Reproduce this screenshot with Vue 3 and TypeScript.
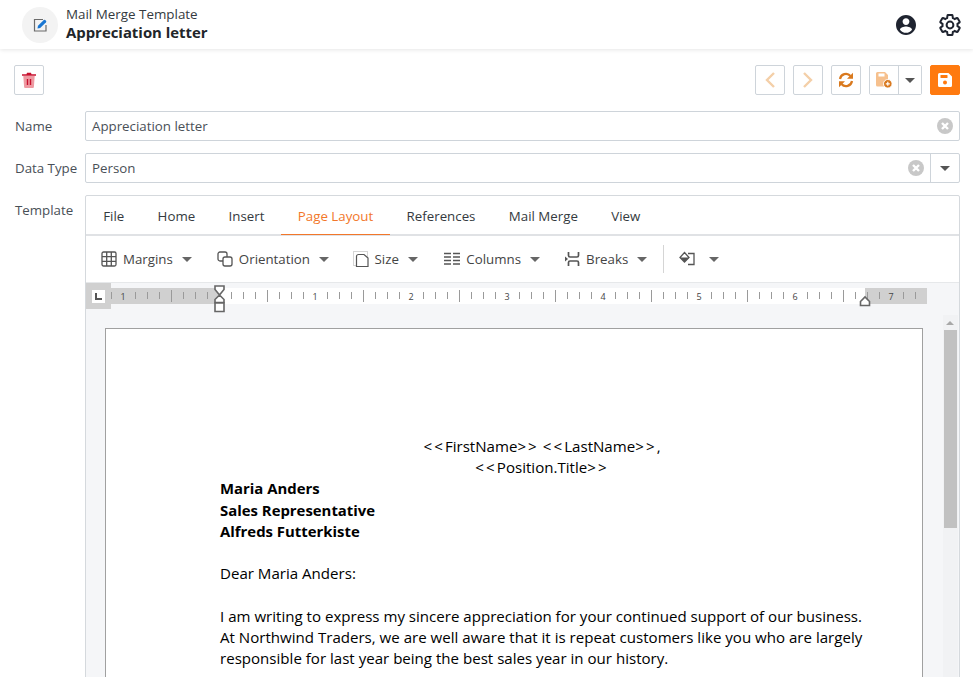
<script setup lang="ts">
const tabs = ['File', 'Home', 'Insert', 'Page Layout', 'References', 'Mail Merge', 'View']
const ticks = Array.from({ length: 68 }, (_, i) => i)
function tickX(i: number): number { return i * 12 + 0.5 }
const inches = [
  { x: 12, t: '1' }, { x: 204, t: '1' }, { x: 300, t: '2' }, { x: 396, t: '3' }, { x: 492, t: '4' },
  { x: 588, t: '5' }, { x: 684, t: '6' }, { x: 780, t: '7' }
]
function isInch(i: number): boolean { return (i * 12 + 960 - 108) % 96 === 0 }
function isHalf(i: number): boolean { return (i * 12 + 960 - 108) % 96 === 48 }
</script>

<template>
  <div class="app">
    <header class="head">
      <div class="head-badge">
        <svg width="18" height="18" viewBox="0 0 18 18">
          <path d="M12 3.500H3.500V15H15V9" fill="none" stroke="#6b6b6b" stroke-width="1.200"/>
          <path d="M7 9.800 12.800 4a1 1 0 0 1 1.400 0l.8.800a1 1 0 0 1 0 1.400L9.200 12l-2.700.5z" fill="#1976d2"/>
        </svg>
      </div>
      <div class="head-text">
        <div class="head-sub">Mail Merge Template</div>
        <div class="head-title">Appreciation letter</div>
      </div>
      <div class="spacer"></div>
      <svg class="head-ico" width="24" height="24" viewBox="0 0 24 24"><path fill="#1f2430" d="M12 2C6.480 2 2 6.480 2 12s4.480 10 10 10 10-4.480 10-10S17.520 2 12 2zm0 3.200c1.900 0 3.400 1.500 3.400 3.400s-1.500 3.400-3.400 3.400-3.400-1.500-3.400-3.400 1.500-3.400 3.400-3.400zm0 14.600c-2.500 0-4.700-1.200-6-3.100.03-2 4-3.100 6-3.100s5.970 1.100 6 3.100c-1.300 1.900-3.500 3.100-6 3.100z"/></svg>
      <svg class="head-ico gear" width="24" height="24" viewBox="0 0 24 24"><path fill="none" stroke="#1f2430" stroke-width="2" d="M19.430 12.980c.04-.32.07-.64.07-.98 0-.34-.03-.66-.07-.98l2.110-1.650c.19-.15.24-.42.12-.64l-2-3.460c-.09-.16-.26-.25-.44-.25-.06 0-.12.01-.17.03l-2.490 1c-.52-.4-1.080-.73-1.690-.98l-.38-2.650C14.460 2.180 14.250 2 14 2h-4c-.25 0-.46.18-.49.42l-.38 2.650c-.61.25-1.170.59-1.690.98l-2.490-1c-.06-.02-.12-.03-.18-.03-.17 0-.34.09-.43.25l-2 3.460c-.13.22-.07.49.12.64l2.110 1.650c-.04.32-.07.65-.07.98 0 .33.03.66.07.98l-2.110 1.650c-.19.15-.24.42-.12.64l2 3.460c.09.16.26.25.44.25.06 0 .12-.01.17-.03l2.490-1c.52.4 1.080.73 1.690.98l.38 2.650c.03.24.24.42.49.42h4c.25 0 .46-.18.49-.42l.38-2.650c.61-.25 1.170-.59 1.690-.98l2.490 1c.06.02.12.03.18.03.17 0 .34-.09.43-.25l2-3.460c.12-.22.07-.49-.12-.64l-2.110-1.650z"/><circle cx="12" cy="12" r="3.400" fill="none" stroke="#1f2430" stroke-width="2"/></svg>
    </header>

    <main class="content">
      <div class="actions">
        <button class="btn">
          <svg width="14" height="16" viewBox="0 0 14 16">
            <path d="M1.300 4h11.400l-.8 11a1 1 0 0 1-1 1H3.100a1 1 0 0 1-1-1z" fill="#ee9aa2"/>
            <path d="M0 2.200h4.500L5 .8h4l.5 1.400H14v1.600H0z" fill="#c8102e"/>
            <path d="M4.800 7h1.400v6H4.800zM7.800 7h1.400v6H7.800z" fill="#c8102e"/>
          </svg>
        </button>
        <div class="spacer"></div>
        <button class="btn">
          <svg width="12" height="18" viewBox="0 0 12 18"><path d="M10 2 3 9l7 7" fill="none" stroke="#f4cfa8" stroke-width="2.400"/></svg>
        </button>
        <button class="btn">
          <svg width="12" height="18" viewBox="0 0 12 18"><path d="m2 2 7 7-7 7" fill="none" stroke="#f4cfa8" stroke-width="2.400"/></svg>
        </button>
        <button class="btn">
          <svg width="16" height="16" viewBox="0 0 16 16">
            <path d="M2 7a6 6 0 0 1 10.500-3" fill="none" stroke="#d9791e" stroke-width="2.200"/>
            <path d="M15 .8v6h-6z" fill="#d9791e"/>
            <path d="M14 9a6 6 0 0 1-10.500 3" fill="none" stroke="#d9791e" stroke-width="2.200"/>
            <path d="M1 15.200v-6h6z" fill="#d9791e"/>
          </svg>
        </button>
        <div class="split">
          <button class="split-main">
            <svg width="18" height="18" viewBox="0 0 18 18">
              <path d="M1 2.500A1.500 1.500 0 0 1 2.500 1H10l3 3v11.500H2.500A1.500 1.500 0 0 1 1 14z" fill="#f6c08d"/>
              <rect x="3.500" y="2.500" width="6" height="3" fill="#fff"/>
              <circle cx="12.800" cy="12.800" r="4.300" fill="#d9791e" stroke="#fff" stroke-width="1"/>
              <path d="M10.800 12.800h4M12.800 10.800v4" stroke="#fff" stroke-width="1.200"/>
            </svg>
          </button>
          <button class="split-arrow"><i class="caret dark"></i></button>
        </div>
        <button class="btn save">
          <svg width="14" height="14" viewBox="0 0 14 14">
            <path d="M1.500 0H10.500L14 3.500V12.500A1.500 1.500 0 0 1 12.500 14H1.500A1.500 1.500 0 0 1 0 12.500V1.500A1.500 1.500 0 0 1 1.500 0z" fill="#fff"/>
            <rect x="2.500" y="2" width="7" height="3" rx=".6" fill="#ff7a0f"/>
            <circle cx="7" cy="9.500" r="2" fill="#ff7a0f"/>
          </svg>
        </button>
      </div>

      <div class="row">
        <label class="lbl">Name</label>
        <div class="field">
          <span class="val">Appreciation letter</span>
          <svg class="clear" width="16" height="16" viewBox="0 0 16 16"><circle cx="8" cy="8" r="8" fill="#c8c8c8"/><path d="m5 5 6 6M11 5l-6 6" stroke="#fff" stroke-width="2.400"/></svg>
        </div>
      </div>
      <div class="row">
        <label class="lbl">Data Type</label>
        <div class="field">
          <span class="val">Person</span>
          <svg class="clear" width="16" height="16" viewBox="0 0 16 16"><circle cx="8" cy="8" r="8" fill="#c8c8c8"/><path d="m5 5 6 6M11 5l-6 6" stroke="#fff" stroke-width="2.400"/></svg>
          <span class="drop"><i class="caret dark"></i></span>
        </div>
      </div>

      <div class="row tpl">
        <label class="lbl">Template</label>
        <div class="editor">
          <nav class="tabs">
            <span v-for="t in tabs" :key="t" class="tab" :class="{ on: t === 'Page Layout' }">{{ t }}</span>
          </nav>
          <div class="tools">
            <span class="tool">
              <svg width="16" height="16" viewBox="0 0 16 16"><rect x="1" y="1" width="14" height="14" rx="1.500" fill="none" stroke="#555" stroke-width="1.300"/><path d="M5.700 1v14M10.300 1v14M1 5.700h14M1 10.300h14" stroke="#555" stroke-width="1.300"/></svg>
              Margins <i class="caret"></i>
            </span>
            <span class="tool">
              <svg width="16" height="16" viewBox="0 0 16 16"><rect x="1" y="1" width="9" height="9" rx="2" fill="none" stroke="#555" stroke-width="1.300"/><rect x="6" y="6" width="9" height="9" rx="2" fill="#fff" stroke="#555" stroke-width="1.300"/></svg>
              Orientation <i class="caret"></i>
            </span>
            <span class="tool tool-size">
              <svg width="16" height="16" viewBox="0 0 16 16"><rect x=".5" y=".5" width="14" height="14" fill="none" stroke="#aaa" stroke-dasharray="1 1"/><path d="M3.500 15.500V5.500a2 2 0 0 1 2-2H11l4 3.500v8.500z" fill="#fff" stroke="#555" stroke-width="1.200"/></svg>
              Size <i class="caret"></i>
            </span>
            <span class="tool">
              <svg width="16" height="16" viewBox="0 0 16 16"><path d="M0 2.500h7M9 2.500h7M0 6h7M9 6h7M0 9.500h7M9 9.500h7M0 13h7M9 13h7" stroke="#555" stroke-width="1.500"/></svg>
              Columns <i class="caret"></i>
            </span>
            <span class="tool tool-breaks">
              <svg width="17" height="16" viewBox="0 0 17 16"><path d="M3.500 1v3.500a1.500 1.500 0 0 0 1.500 1.500h7a1.500 1.500 0 0 0 1.500-1.500V1M3.500 15v-3.500A1.500 1.500 0 0 1 5 10h7a1.500 1.500 0 0 1 1.500 1.500V15" fill="none" stroke="#555" stroke-width="1.700"/><path d="M0 5.500 3 8l-3 2.500z" fill="#555"/></svg>
              Breaks <i class="caret"></i>
            </span>
            <span class="sep"></span>
            <span class="tool">
              <svg width="17" height="16" viewBox="0 0 17 16"><path d="M9 2.500h6v11H9" fill="none" stroke="#555" stroke-width="1.300"/><path d="M5.500 1.500 10 6.500 5.500 11 1 6.500z" fill="#fff" stroke="#555" stroke-width="1.300"/><path d="M1 6.500h9L5.500 11z" fill="#555"/></svg>
              <i class="caret wide"></i>
            </span>
          </div>
          <div class="ruler-row">
            <span class="corner"><i class="corner-mark"></i></span>
            <svg class="ruler" width="848" height="30" viewBox="0 0 848 30">
              <rect x="0" y="5" width="816" height="16" fill="#fff"/>
              <rect x="0" y="5" width="108" height="16" fill="#d0d0d0"/>
              <rect x="754" y="5" width="62" height="16" fill="#d0d0d0"/>
              <template v-for="i in ticks" :key="i">
                <line v-if="!isInch(i)" :x1="tickX(i)" :x2="tickX(i)" :y1="isHalf(i) ? 7 : 9" :y2="isHalf(i) ? 19 : 16" stroke="#9a9a9a"/>
              </template>
              <text v-for="n in inches" :key="n.x" :x="n.x" y="16.500" class="rnum" text-anchor="middle">{{ n.t }}</text>
              <path d="M104 3h9v3.500L108.500 12l4.500 4.500v3h-9v-3l4.500-4.500L104 6.500z" fill="#fff" stroke="#666" stroke-width="1.600" />
              <path d="M104 20h9v8.500h-9z" fill="#fff" stroke="#666" stroke-width="1.600"/>
              <path d="M749.500 22.500V18.500L754 14l4.500 4.500v4z" fill="#fff" stroke="#666" stroke-width="1.600"/>
            </svg>
          </div>
          <div class="viewport">
            <div class="page">
              <p class="c"><span class="br">&lt;&lt;</span>FirstName<span class="br">&gt;&gt;</span> <span class="br">&lt;&lt;</span>LastName<span class="br">&gt;&gt;</span>,</p>
              <p class="c"><span class="br">&lt;&lt;</span>Position.Title<span class="br">&gt;&gt;</span></p>
              <p class="b">Maria Anders</p>
              <p class="b">Sales Representative</p>
              <p class="b">Alfreds Futterkiste</p>
              <p>&nbsp;</p>
              <p>Dear Maria Anders:</p>
              <p>&nbsp;</p>
              <p>I am writing to express my sincere appreciation for your continued support of our business. At Northwind Traders, we are well aware that it is repeat customers like you who are largely responsible for last year being the best sales year in our history.</p>
            </div>
            <div class="scroll">
              <i class="scroll-up"></i>
              <i class="thumb"></i>
            </div>
          </div>
        </div>
      </div>
    </main>
  </div>
</template>

<style>
html, body { margin: 0; background: #fff; overflow: hidden; }
</style>

<style scoped>
.app { width: 973px; height: 677px; overflow: hidden; display: flex; flex-direction: column; font-family: "Open Sans", "Noto Sans", sans-serif; font-size: 13.300px; color: #495057; background: #fff; }
.head { height: 49px; flex: none; display: flex; align-items: center; padding: 0 11px 0 22px; box-shadow: 0 1px 4px rgba(0,0,0,.1); box-sizing: border-box; position: relative; }
.head-badge { width: 36px; height: 36px; border-radius: 50%; background: #f3f3f3; display: flex; align-items: center; justify-content: center; margin-right: 8px; }
.head-text { display: flex; flex-direction: column; margin-bottom: 2px; }
.head-sub { font-size: 13.400px; line-height: 17px; color: #343a40; }
.head-title { font-size: 14.900px; line-height: 19px; font-weight: 700; color: #212529; }
.spacer { flex: 1; }
.gear { margin-left: 20px; }
.content { flex: 1; padding: 16px 13px 0 14px; min-height: 0; }
.actions { display: flex; gap: 8px; height: 30px; margin-bottom: 16px; }
.btn { width: 30px; height: 30px; padding: 0; background: #fff; border: 1px solid #ced4da; border-radius: 2px; display: flex; align-items: center; justify-content: center; }
.save { background: #ff7a0f; border-color: #ff7a0f; }
.split { display: flex; height: 30px; border: 1px solid #ced4da; border-radius: 2px; box-sizing: border-box; }
.split-main { width: 28px; border: 0; background: #fff; padding: 0; display: flex; align-items: center; justify-content: center; }
.split-arrow { width: 23px; border: 0; border-left: 1px solid #ced4da; background: #fff; padding: 0; display: flex; align-items: center; justify-content: center; box-sizing: border-box; }
.caret { display: inline-block; width: 0; height: 0; border-left: 5px solid transparent; border-right: 5px solid transparent; border-top: 5px solid #666; margin-left: 3px; }
.caret.dark { margin: 0; border-top-color: #555; }
.caret.wide { margin-left: 7px; }
.row { display: flex; margin-bottom: 12px; }
.lbl { width: 71px; flex: none; line-height: 30px; padding-left: 1px; box-sizing: border-box; color: #495057; }
.field { flex: 1; height: 30px; box-sizing: border-box; border: 1px solid #ced4da; border-radius: 2px; display: flex; align-items: center; padding-left: 6px; }
.val { flex: 1; color: #495057; }
.clear { margin-right: 6px; flex: none; }
.drop { width: 28px; align-self: stretch; border-left: 1px solid #ced4da; display: flex; align-items: center; justify-content: center; margin-left: 6px; }
.field:has(.drop) .clear { margin-right: 0; }
.tpl { margin: 0; }
.editor { flex: 1; border: 1px solid #d5d9dd; border-radius: 2px 2px 0 0; height: 600px; box-sizing: border-box; }
.tabs { height: 38px; display: flex; border-bottom: 2px solid #e0e2e5; padding-left: .5px; }
.tab { padding: 0 16.700px; line-height: 40px; color: #343a40; height: 39px; flex: none; box-sizing: border-box; }
.tab.on { color: #f2772a; border-bottom: 1px solid #f2772a; }
.tools { height: 46px; display: flex; align-items: center; padding-left: 15px; gap: 25px; border-bottom: 1px solid #e6e8ea; }
.tool { display: inline-flex; align-items: center; gap: 6px; color: #444; }
.tool-size { margin-left: -1.500px; margin-right: 1.500px; }
.tool-breaks { gap: 4px; }
.tool-breaks .caret { margin-left: 5px; }
.sep { width: 1px; height: 28px; background: #d5d5d5; margin: 0 -10px 0 -9px; }
.ruler-row { height: 30px; background: #f5f6f8; display: flex; }
.corner { width: 25px; height: 26px; background: #d0d0d0; display: flex; align-items: center; justify-content: center; flex: none; }
.corner-mark { width: 7px; height: 7px; background: #fff; box-shadow: 0 0 0 3px #fff; border-left: 2px solid #555; border-bottom: 2px solid #555; box-sizing: border-box; }
.ruler { display: block; flex: none; }
.rnum { font-size: 9px; fill: #444; font-family: "Open Sans", sans-serif; }
.viewport { background: #f5f6f8; display: flex; align-items: flex-start; height: 500px; padding: 15px 0 0 19px; position: relative; }
.page { width: 818px; box-sizing: border-box; background: #fff; border: 1px solid #a0a0a0; padding: 107px 58px 0 114px; height: 500px; color: #000; font-size: 15.090px; line-height: 21.200px; }
.page p { margin: 0; }
.c { text-align: center; }
.br { letter-spacing: 2.100px; }
.b { font-weight: 700; font-size: 14.900px; }
.scroll { position: absolute; top: 2px; left: 857px; width: 15px; height: 500px; background: #f1f2f4; }
.scroll-up { position: absolute; top: 6px; left: 3px; width: 0; height: 0; border-left: 4px solid transparent; border-right: 4px solid transparent; border-bottom: 4px solid #a8a8a8; }
.thumb { position: absolute; top: 15px; left: 1px; width: 13px; height: 198px; background: #c1c1c1; }
</style>
